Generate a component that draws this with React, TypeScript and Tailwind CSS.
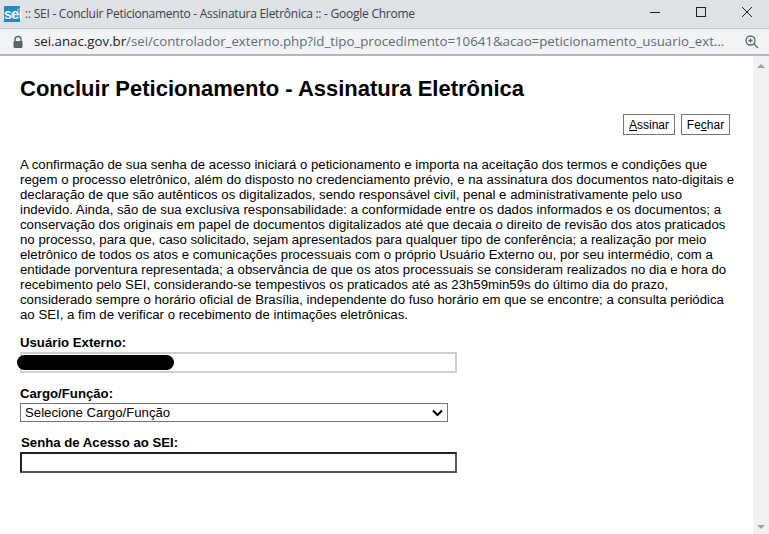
const linhas = [
  "A confirmação de sua senha de acesso iniciará o peticionamento e importa na aceitação dos termos e condições que",
  "regem o processo eletrônico, além do disposto no credenciamento prévio, e na assinatura dos documentos nato-digitais e",
  "declaração de que são autênticos os digitalizados, sendo responsável civil, penal e administrativamente pelo uso",
  "indevido. Ainda, são de sua exclusiva responsabilidade: a conformidade entre os dados informados e os documentos; a",
  "conservação dos originais em papel de documentos digitalizados até que decaia o direito de revisão dos atos praticados",
  "no processo, para que, caso solicitado, sejam apresentados para qualquer tipo de conferência; a realização por meio",
  "eletrônico de todos os atos e comunicações processuais com o próprio Usuário Externo ou, por seu intermédio, com a",
  "entidade porventura representada; a observância de que os atos processuais se consideram realizados no dia e hora do",
  "recebimento pelo SEI, considerando-se tempestivos os praticados até as 23h59min59s do último dia do prazo,",
  "considerado sempre o horário oficial de Brasília, independente do fuso horário em que se encontre; a consulta periódica",
  "ao SEI, a fim de verificar o recebimento de intimações eletrônicas.",
];

function Botao({ antes, tecla, depois, largura }: { antes: string; tecla: string; depois: string; largura: string }) {
  return (
    <button className={`${largura} h-[21px] border border-[#767676] bg-white text-[12px] leading-none text-black flex items-center justify-center`}>
      {antes}
      <span className="underline">{tecla}</span>
      {depois}
    </button>
  );
}

export default function App() {
  return (
    <div className="w-[769px] h-[534px] overflow-hidden bg-white flex flex-col font-['Liberation_Sans',Arial,sans-serif] text-black">
      {/* barra de titulo */}
      <div className="h-[28px] bg-[#dee1e6] flex items-center shrink-0 font-['Open_Sans',sans-serif]">
        <div className="relative ml-[4px] w-[16px] h-[16px] bg-[#1a8fc4] text-white text-[14px] font-bold leading-[16px] text-center font-['Liberation_Sans',sans-serif] tracking-[-0.5px]">
          sei
          <span className="absolute right-[1px] top-[3px] w-[2px] h-[2px] bg-[#8fd14f]" />
        </div>
        <span className="ml-[5px] text-[12px] tracking-[-0.25px] text-[#3c4043] whitespace-nowrap">
          :: SEI - Concluir Peticionamento - Assinatura Eletrônica :: - Google Chrome
        </span>
        <div className="ml-auto flex items-center">
          <svg width="46" height="28" viewBox="0 0 46 28">
            <path d="M19 12.5h10" stroke="#1f1f1f" strokeWidth="1" />
          </svg>
          <svg width="46" height="28" viewBox="0 0 46 28">
            <rect x="19.5" y="7.5" width="9" height="9" fill="none" stroke="#1f1f1f" strokeWidth="1" />
          </svg>
          <svg width="46" height="28" viewBox="0 0 46 28">
            <path d="M19 7l10 10M29 7L19 17" stroke="#1f1f1f" strokeWidth="1" />
          </svg>
        </div>
      </div>

      {/* barra de endereco */}
      <div className="h-[28px] bg-[#f1f3f4] border-t border-[#c4c7cb] border-b-2 border-b-[#b5b7ba] flex items-center shrink-0 font-['Open_Sans',sans-serif]">
        <svg width="12" height="14" viewBox="0 0 12 14" className="ml-[12px]">
          <path d="M3 6V4.5a3 3 0 0 1 6 0V6" fill="none" stroke="#5f6368" strokeWidth="1.4" />
          <rect x="1.5" y="6" width="9" height="7" rx="1" fill="#5f6368" />
        </svg>
        <span className="ml-[10px] text-[13.25px] whitespace-nowrap text-[#5f6b7a] w-[695px] overflow-hidden">
          <span className="text-[#202124]">sei.anac.gov.br</span>
          /sei/controlador_externo.php?id_tipo_procedimento=10641&amp;acao=peticionamento_usuario_ext...
        </span>
        <svg width="16" height="16" viewBox="0 0 16 16" className="ml-auto mr-[8px]">
          <circle cx="5.5" cy="6.5" r="4.5" fill="none" stroke="#5f6368" strokeWidth="1.3" />
          <path d="M8.8 9.8l4.2 4.2M3.5 6.5h4M5.5 4.5v4" stroke="#5f6368" strokeWidth="1.3" fill="none" />
        </svg>
      </div>

      <div className="flex flex-1 min-h-0">
        <main className="flex-1 min-w-0 pl-[20px] pr-[23px] pt-[20px]">
          <h1 className="text-[22px] font-bold leading-[26px]">Concluir Peticionamento - Assinatura Eletrônica</h1>

          <div className="flex justify-end gap-[6px] mt-[12px]">
            <Botao antes="" tecla="A" depois="ssinar" largura="w-[52px]" />
            <Botao antes="Fe" tecla="c" depois="har" largura="w-[49px]" />
          </div>

          <p className="mt-[22px] text-[13.22px] leading-[15px] whitespace-nowrap">
            {linhas.map((l) => (
              <span key={l} className="block">{l}</span>
            ))}
          </p>

          <div className="mt-[13px] w-[437px]">
            <label className="block text-[13.2px] font-bold leading-[15px]">Usuário Externo:</label>
            <div className="relative h-[21px] mt-[2px] border-2 border-[#cfcfcf] bg-white">
              <div className="absolute left-[-5px] top-[1px] w-[157px] h-[15px] rounded-full bg-black" />
            </div>
          </div>

          <div className="mt-[13px] w-[428px]">
            <label className="block text-[13.2px] font-bold leading-[15px]">Cargo/Função:</label>
            <div className="h-[19px] mt-[2px] border border-[#767676] bg-white flex items-center justify-between pl-[4px] pr-[4px] text-[13.2px]">
              <span>Selecione Cargo/Função</span>
              <svg width="11" height="8" viewBox="0 0 11 8">
                <path d="M1 1.5l4.5 4.5L10 1.5" fill="none" stroke="#000" strokeWidth="2" />
              </svg>
            </div>
          </div>

          <div className="mt-[13px] w-[437px]">
            <label className="block text-[13.2px] font-bold leading-[15px] pl-[1px]">Senha de Acesso ao SEI:</label>
            <div className="h-[21px] mt-[2px] border-2 border-t-[#222] border-l-[#222] border-r-[#555] border-b-[#555] bg-white" />
          </div>
        </main>

        {/* barra de rolagem */}
        <div className="w-[16px] shrink-0 bg-[#f1f1f1] flex flex-col items-center justify-between pt-[8px] pb-[5px]">
          <div className="w-0 h-0 border-x-[4px] border-x-transparent border-b-[4px] border-b-[#a3a3a3]" />
          <div className="w-0 h-0 border-x-[4px] border-x-transparent border-t-[4px] border-t-[#a3a3a3]" />
        </div>
      </div>
    </div>
  );
}
